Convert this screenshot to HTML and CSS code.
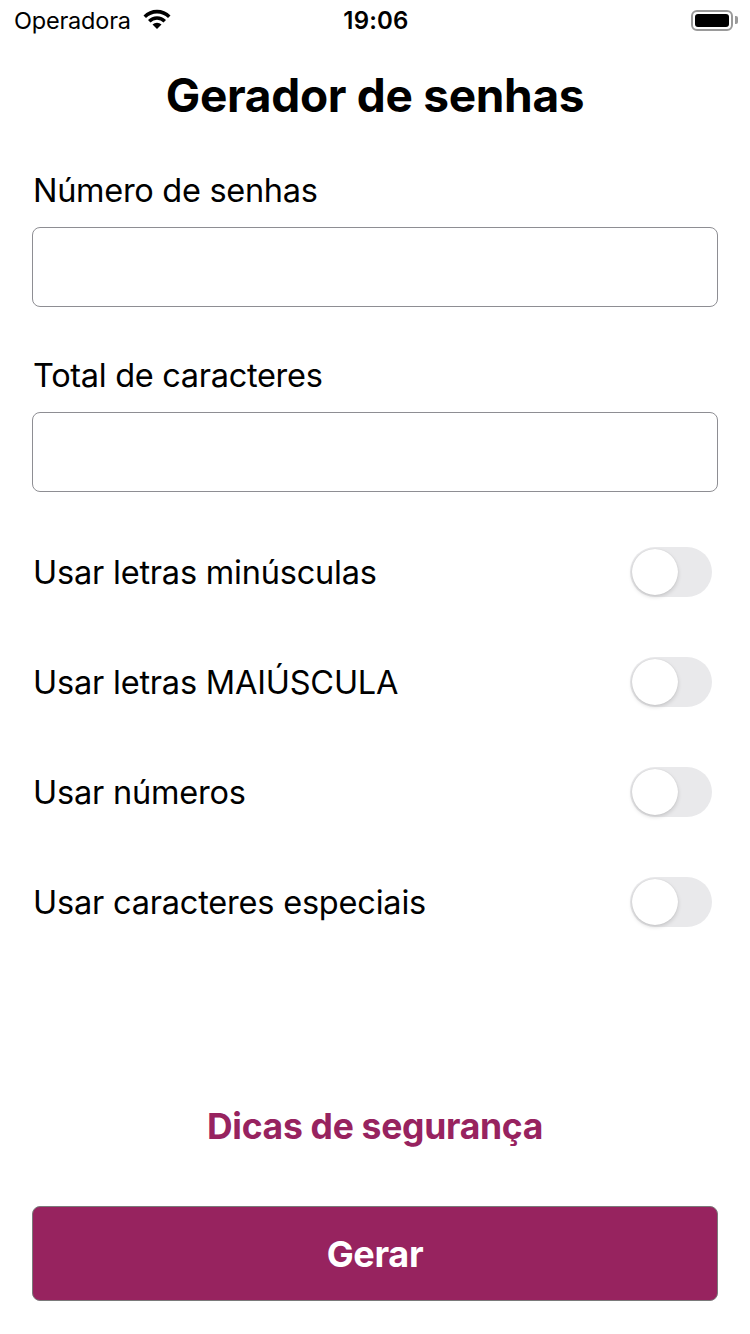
FILE: index.html
```html
<!DOCTYPE html>
<html lang="pt-BR">
<head>
<meta charset="utf-8">
<title>Gerador de senhas</title>
<link rel="stylesheet" href="styles.css">
</head>
<body>
<div class="page">
  <div class="status">
    <div class="status-left">
      <span class="carrier">Operadora</span>
      <svg class="wifi" width="30" height="22" viewBox="0 0 30 22">
        <path d="M1.5 7.5 A19 19 0 0 1 28.5 7.5 L26 10 A15.5 15.5 0 0 0 4 10 Z" fill="#000"/>
        <path d="M6 12 A12.5 12.5 0 0 1 24 12 L21.5 14.5 A9 9 0 0 0 8.5 14.5 Z" fill="#000"/>
        <path d="M10.5 16.5 A6.5 6.5 0 0 1 19.5 16.5 L15 21 Z" fill="#000"/>
      </svg>
    </div>
    <div class="time">19:06</div>
    <div class="status-right">
      <div class="battery"><div class="battery-fill"></div></div>
      <div class="battery-cap"></div>
    </div>
  </div>

  <h1 class="title">Gerador de senhas</h1>

  <div class="form">
    <label class="field-label">Número de senhas</label>
    <input class="field-input" type="text">
    <label class="field-label second">Total de caracteres</label>
    <input class="field-input" type="text">

    <div class="toggles">
      <div class="toggle-row"><span class="toggle-label">Usar letras minúsculas</span><span class="switch"><span class="knob"></span></span></div>
      <div class="toggle-row"><span class="toggle-label">Usar letras MAIÚSCULA</span><span class="switch"><span class="knob"></span></span></div>
      <div class="toggle-row"><span class="toggle-label">Usar números</span><span class="switch"><span class="knob"></span></span></div>
      <div class="toggle-row"><span class="toggle-label">Usar caracteres especiais</span><span class="switch"><span class="knob"></span></span></div>
    </div>
  </div>

  <div class="spacer"></div>

  <div class="tips">Dicas de segurança</div>
  <button class="generate">Gerar</button>
</div>
</body>
</html>
```

FILE: styles.css
```css
* { box-sizing: border-box; }
html, body {
  margin: 0;
  padding: 0;
  background: #fff;
}
body {
  font-family: Inter, "Liberation Sans", sans-serif;
  color: #000;
}
.page {
  width: 750px;
  height: 1334px;
  display: flex;
  flex-direction: column;
}
.status {
  height: 40px;
  display: grid;
  grid-template-columns: 1fr auto 1fr;
  align-items: center;
  padding: 0 12px 0 14px;
}
.status-left {
  display: flex;
  align-items: center;
  gap: 11px;
}
.carrier {
  font-size: 23.5px;
  letter-spacing: -0.2px;
}
.wifi { margin-top: -2px; }
.time {
  font-size: 24px;
  font-weight: 600;
  letter-spacing: 0.2px;
}
.status-right {
  display: flex;
  align-items: center;
  justify-content: flex-end;
  gap: 2px;
}
.battery {
  width: 42px;
  height: 21px;
  border: 2px solid #9a9a9a;
  border-radius: 6px;
  padding: 2px;
}
.battery-fill {
  width: 100%;
  height: 100%;
  background: #000;
  border-radius: 3px;
}
.battery-cap {
  width: 3px;
  height: 8px;
  background: #9a9a9a;
  border-radius: 0 2px 2px 0;
}
.title {
  margin: 29px 0 0;
  height: 52px;
  line-height: 52px;
  font-size: 46px;
  font-weight: 700;
  text-align: center;
  letter-spacing: -0.3px;
}
.form {
  display: flex;
  flex-direction: column;
  padding: 0 32px;
  margin-top: 50px;
}
.field-label {
  height: 40px;
  line-height: 40px;
  font-size: 32.5px;
  letter-spacing: -0.3px;
  padding-left: 1px;
}
.field-label.second { margin-top: 49px; }
.field-input {
  margin-top: 16px;
  height: 80px;
  width: 100%;
  border: 1px solid #8e8e93;
  border-radius: 8px;
  background: #fff;
  font: inherit;
}
.toggles {
  margin-top: 25px;
  display: flex;
  flex-direction: column;
}
.toggle-row {
  height: 110px;
  display: flex;
  align-items: center;
  justify-content: space-between;
  padding-left: 1px;
}
.toggle-label {
  font-size: 32.5px;
  letter-spacing: -0.2px;
}
.switch {
  width: 82px;
  height: 50px;
  border-radius: 25px;
  background: #e9e9eb;
  padding: 2px;
  margin-right: 6px;
  display: flex;
  align-items: center;
}
.knob {
  width: 46px;
  height: 46px;
  border-radius: 50%;
  background: #fff;
  box-shadow: 0 2px 4px rgba(0,0,0,0.15), 0 0 1px rgba(0,0,0,0.15);
}
.spacer { flex: 1; }
.tips {
  height: 50px;
  line-height: 50px;
  text-align: center;
  font-size: 35.5px;
  font-weight: 700;
  color: #97235f;
  letter-spacing: -0.3px;
}
.generate {
  margin: 54px 32px 33px;
  height: 95px;
  background: #97235f;
  border: 1px solid #7a7a7a;
  border-radius: 8px;
  color: #fff;
  font-family: inherit;
  font-size: 36px;
  font-weight: 700;
  letter-spacing: -0.3px;
}
```
